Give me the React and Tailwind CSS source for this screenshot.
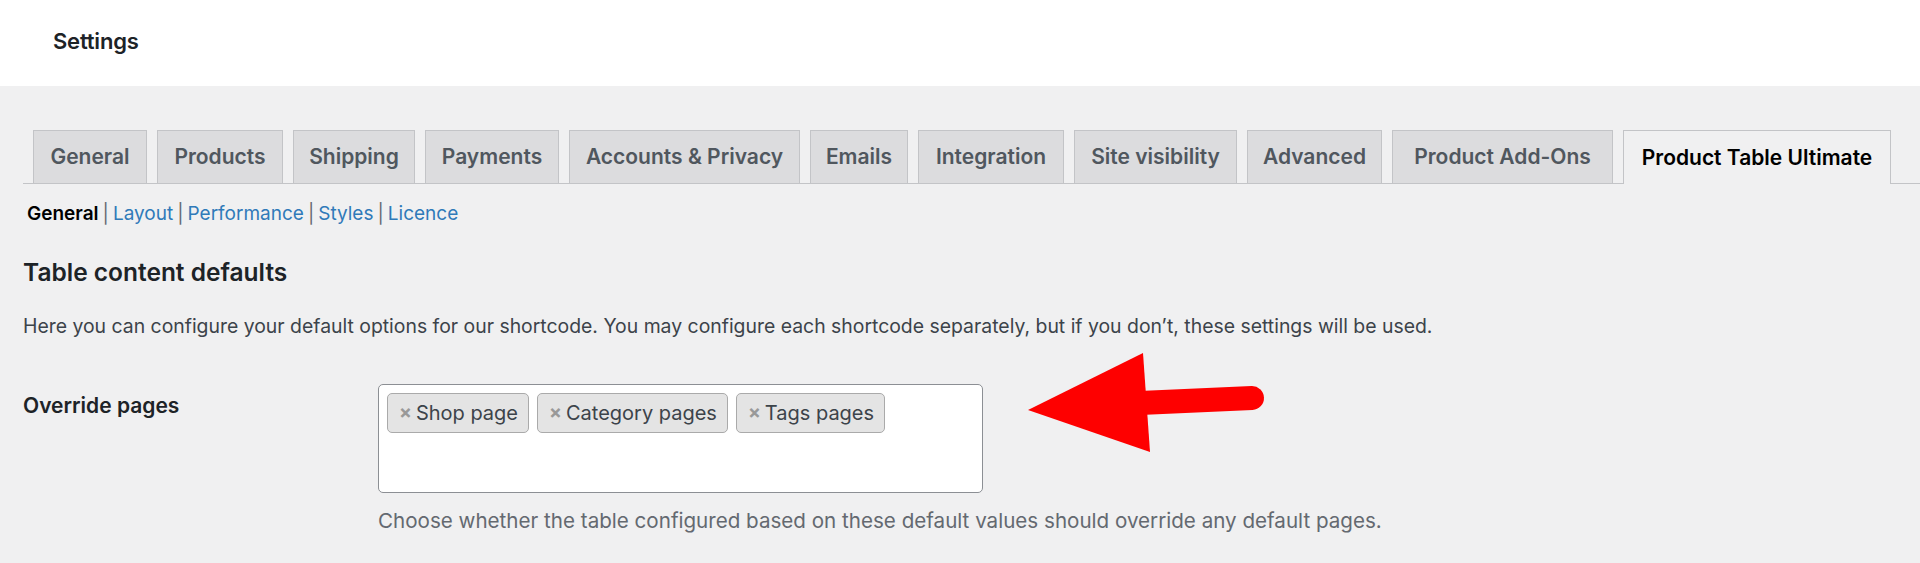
import React from "react";

const tabs = [
  { label: "General", w: "w-[114px]" },
  { label: "Products", w: "w-[126px]" },
  { label: "Shipping", w: "w-[122px]" },
  { label: "Payments", w: "w-[134px]" },
  { label: "Accounts & Privacy", w: "w-[231px]" },
  { label: "Emails", w: "w-[98px]" },
  { label: "Integration", w: "w-[146px]" },
  { label: "Site visibility", w: "w-[163px]" },
  { label: "Advanced", w: "w-[135px]" },
  { label: "Product Add-Ons", w: "w-[221px]" },
  { label: "Product Table Ultimate", w: "w-[268px]", active: true },
];

const subLinks = ["Layout", "Performance", "Styles", "Licence"];

const pages = ["Shop page", "Category pages", "Tags pages"];

// red annotation arrow pointing at the select box
function Arrow() {
  return (
    <svg width="260" height="120" viewBox="0 0 260 120" className="absolute left-[1020px] top-[344px]">
      <line x1="120" y1="59" x2="232" y2="54" stroke="#fe0000" strokeWidth="24" strokeLinecap="round" />
      <polygon points="8,66 123,9 130,108" fill="#fe0000" />
    </svg>
  );
}

export default function App() {
  return (
    <div className="relative min-h-screen bg-[#f0f0f1] font-['Inter','Liberation_Sans',sans-serif] text-[#3c434a]">
      <div className="h-[86px] bg-white flex items-center pl-[53px] pb-[4px]">
        <h1 className="text-[22px] font-semibold text-[#1d2327] tracking-[-0.2px]">Settings</h1>
      </div>

      <div className="pl-[23px]">
        <nav className="mt-[44px] flex items-end gap-[10px] pl-[10px] border-b border-[#c3c4c7]">
          {tabs.map((t) => (
            <a
              key={t.label}
              className={
                t.active
                  ? `${t.w} h-[54px] -mb-px flex items-center justify-center border border-b-0 border-[#c3c4c7] bg-[#f0f0f1] text-black text-[21px] font-semibold`
                  : `${t.w} h-[53px] flex items-center justify-center border border-b-0 border-[#c3c4c7] bg-[#dcdcde] text-[#50575e] text-[21px] font-semibold`
              }
            >
              {t.label}
            </a>
          ))}
        </nav>

        <div className="mt-[15px] pl-[4px] text-[19px] leading-[29px] flex items-center">
          <span className="font-semibold text-black">General</span>
          {subLinks.map((l) => (
            <span key={l} className="flex items-center">
              <span className="mx-[4px] text-[#646970]">|</span>
              <a className="text-[#2f7ab9]">{l}</a>
            </span>
          ))}
        </div>

        <h2 className="mt-[27px] text-[24.5px] leading-[34px] font-semibold text-[#1d2327]">
          Table content defaults
        </h2>

        <p className="mt-[23px] text-[19.4px] leading-[28px] text-[#3c434a]">
          Here you can configure your default options for our shortcode. You may configure each shortcode separately, but if you don’t, these settings will be used.
        </p>

        <div className="mt-[44px] flex">
          <div className="w-[355px] pt-[7px] text-[21px] leading-[30px] font-semibold text-[#1d2327]">
            Override pages
          </div>
          <div>
            <div className="w-[605px] h-[109px] bg-white border border-[#8c8f94] rounded-[5px] p-[8px] flex items-start gap-[8px]">
              {pages.map((p) => (
                <span
                  key={p}
                  className="h-[40px] flex items-center bg-[#e4e4e4] border border-[#aaaaaa] rounded-[5px] pl-[11px] pr-[10px] text-[20px] text-[#3c434a]"
                >
                  <span className="text-[#999999] text-[19px] font-bold mr-[4px]">×</span>
                  {p}
                </span>
              ))}
            </div>
            <p className="mt-[13px] text-[20.6px] leading-[30px] text-[#646970]">
              Choose whether the table configured based on these default values should override any default pages.
            </p>
          </div>
        </div>
      </div>

      <Arrow />
    </div>
  );
}
